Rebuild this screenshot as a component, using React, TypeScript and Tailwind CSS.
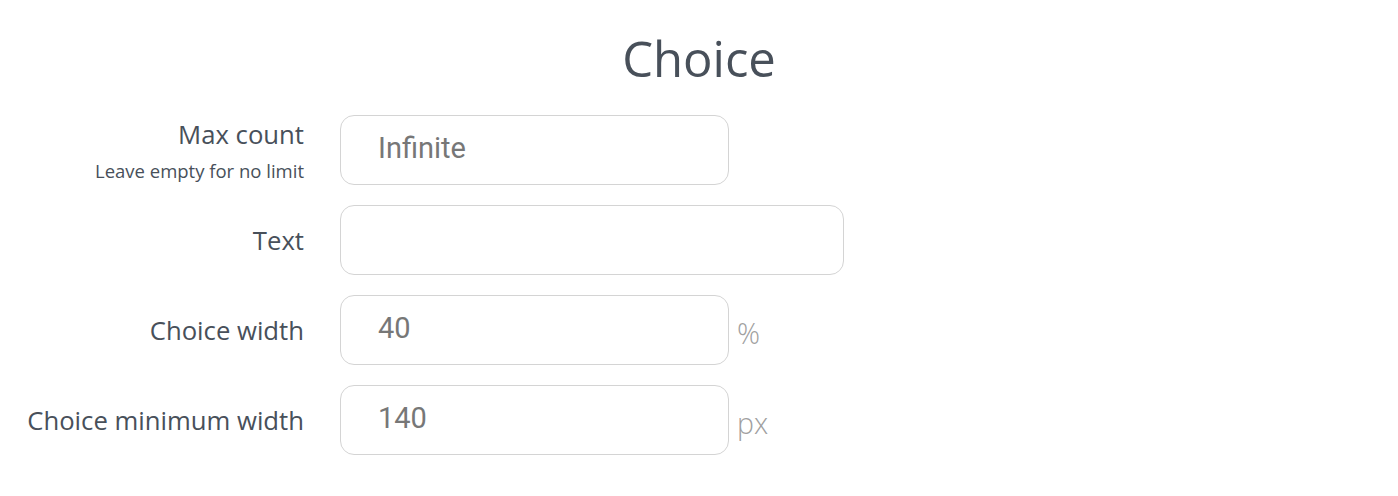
import React from "react";

type RowProps = { label: string; hint?: string; value?: string; wide?: boolean; unit?: string };

function Row({ label, hint, value, wide, unit }: RowProps) {
  return (
    <div className="flex items-center">
      <div className="w-[304px] flex flex-col items-end text-[#48505a] font-['Open_Sans',sans-serif] mt-[2px]">
        <div className={`text-[25.7px] ${hint ? "leading-[30px]" : ""}`}>{label}</div>
        {hint && <div className="text-[18.5px] leading-[25px] mt-[8px]">{hint}</div>}
      </div>
      <div className="ml-[36px] flex items-center gap-[8px]">
        <div
          className={`h-[70px] ${wide ? "w-[504px]" : "w-[389px]"} rounded-[14px] border border-[#d4d4d4] bg-white flex items-center pl-[37px] pb-[2px] text-[29px] text-[#777777] font-['Roboto',sans-serif]`}
        >
          {value}
        </div>
        {unit && (
          <div className="text-[28.5px] leading-[28px] mt-[6px] font-light text-[#a0a0a0] font-['Open_Sans',sans-serif]">
            {unit}
          </div>
        )}
      </div>
    </div>
  );
}

export default function App() {
  return (
    <div className="w-[1398px] h-[496px] bg-white">
      <div className="pt-[34px] text-center text-[49px] leading-[49px] text-[#48505a] font-['Open_Sans',sans-serif]">
        Choice
      </div>
      <div className="mt-[32px] flex flex-col gap-[20px]">
        <Row label="Max count" hint="Leave empty for no limit" value="Infinite" />
        <Row label="Text" wide />
        <Row label="Choice width" value="40" unit="%" />
        <Row label="Choice minimum width" value="140" unit="px" />
      </div>
    </div>
  );
}
